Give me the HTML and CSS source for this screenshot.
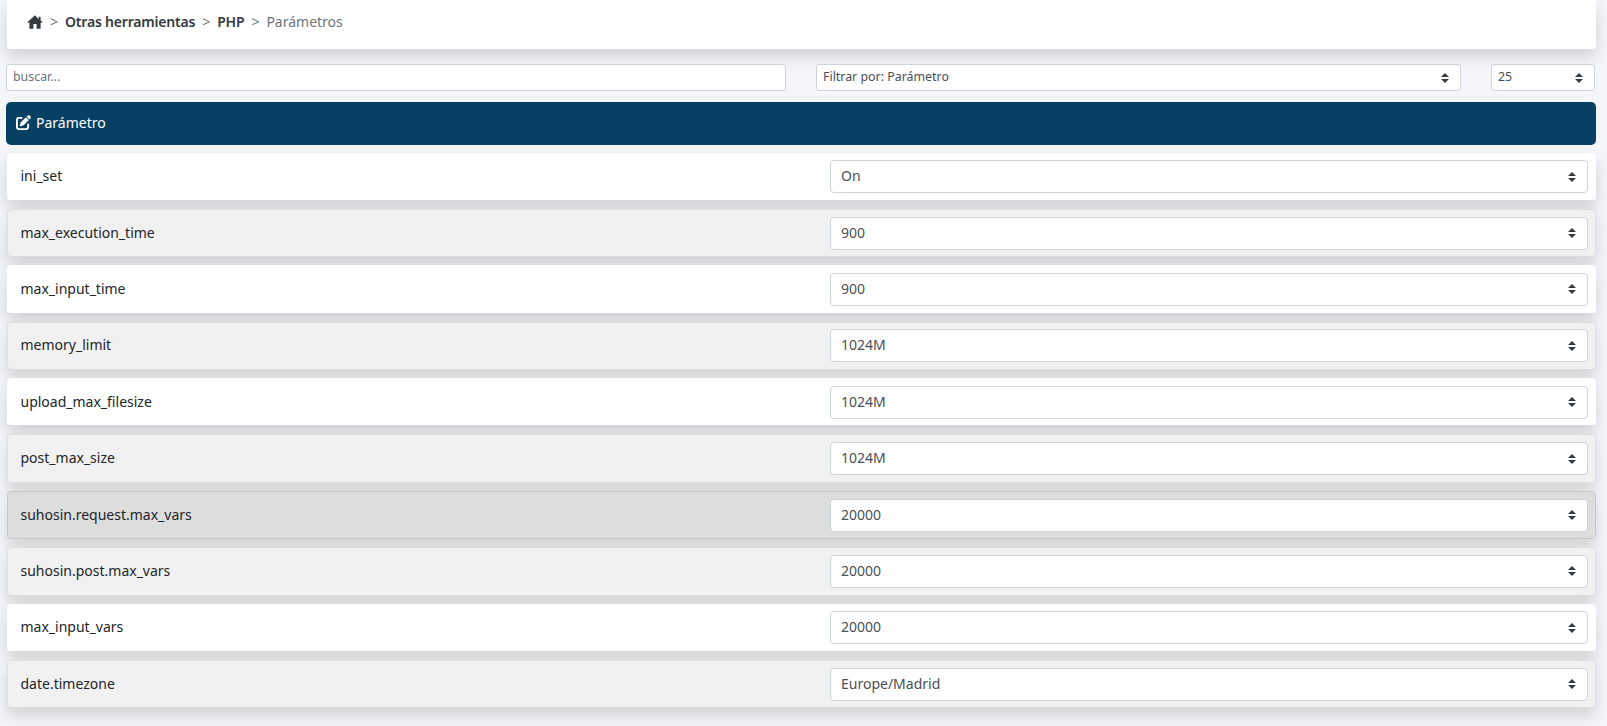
FILE: index.html
```html
<!DOCTYPE html>
<html lang="es">
<head>
<meta charset="utf-8">
<title>Parámetros</title>
<link rel="stylesheet" href="styles.css">
</head>
<body>
<div class="page">
  <nav class="crumbs">
    <svg class="home" viewBox="2 3 20 17" aria-hidden="true"><path d="M10 20v-6h4v6h5v-8h3l-3-2.7V5h-2.5v2.95L12 3 2 12h3v8z"/></svg>
    <span class="sep">&gt;</span>
    <a class="crumb">Otras herramientas</a>
    <span class="sep">&gt;</span>
    <a class="crumb">PHP</a>
    <span class="sep">&gt;</span>
    <span class="current">Parámetros</span>
  </nav>

  <div class="filters">
    <input class="field" type="text" placeholder="buscar...">
    <select class="field pick"><option>Filtrar por: Parámetro</option></select>
    <select class="field pick"><option>25</option></select>
  </div>

  <div class="head">
    <svg class="edit" viewBox="0 0 512 512" aria-hidden="true"><path d="M471.6 21.7c-21.9-21.9-57.3-21.9-79.2 0L362.3 51.7l97.9 97.9 30.1-30.1c21.9-21.9 21.9-57.3 0-79.2L471.6 21.7zm-299.2 220c-6.1 6.1-10.8 13.6-13.5 21.9l-29.6 88.8c-2.9 8.6-.6 18.1 5.8 24.6s15.9 8.7 24.6 5.8l88.8-29.6c8.2-2.7 15.7-7.4 21.9-13.5L437.7 172.3 339.7 74.3 172.4 241.7zM96 64C43 64 0 107 0 160V416c0 53 43 96 96 96H352c53 0 96-43 96-96V320c0-17.7-14.3-32-32-32s-32 14.3-32 32v96c0 17.7-14.3 32-32 32H96c-17.7 0-32-14.3-32-32V160c0-17.7 14.3-32 32-32h96c17.7 0 32-14.3 32-32s-14.3-32-32-32H96z"/></svg>
    <span>Parámetro</span>
  </div>

  <div class="rows">
    <div class="row light"><span class="name">ini_set</span><select class="value"><option>On</option></select></div>
    <div class="row grey"><span class="name">max_execution_time</span><select class="value"><option>900</option></select></div>
    <div class="row light"><span class="name">max_input_time</span><select class="value"><option>900</option></select></div>
    <div class="row grey"><span class="name">memory_limit</span><select class="value"><option>1024M</option></select></div>
    <div class="row light"><span class="name">upload_max_filesize</span><select class="value"><option>1024M</option></select></div>
    <div class="row grey"><span class="name">post_max_size</span><select class="value"><option>1024M</option></select></div>
    <div class="row active"><span class="name">suhosin.request.max_vars</span><select class="value"><option>20000</option></select></div>
    <div class="row grey"><span class="name">suhosin.post.max_vars</span><select class="value"><option>20000</option></select></div>
    <div class="row light"><span class="name">max_input_vars</span><select class="value"><option>20000</option></select></div>
    <div class="row grey"><span class="name">date.timezone</span><select class="value"><option>Europe/Madrid</option></select></div>
  </div>
</div>
</body>
</html>
```

FILE: styles.css
```css
* { box-sizing: border-box; }

html, body {
  margin: 0;
  height: 100%;
  overflow: hidden;
}

body {
  background: #f4f6f9;
  color: #212529;
  font-family: "Noto Sans", Lato, sans-serif;
  font-size: 14px;
}

.page {
  padding: 0 11px 0 6px;
}

.crumbs {
  display: flex;
  align-items: center;
  height: 49px;
  margin: 0 0 15px 1px;
  padding: 0 0 6px 20px;
  background: #fff;
  border-radius: 0 0 4px 4px;
  box-shadow: 0 8px 16px rgba(0, 0, 0, .15);
  font-size: 14px;
}

.home {
  width: 16px;
  height: 14px;
  fill: #343a40;
}

.sep {
  margin: 0 7px;
  color: #6c757d;
}

.crumb {
  color: #343a40;
  font-weight: 600;
  letter-spacing: -.2px;
}

.current {
  color: #6c757d;
}

.filters {
  display: grid;
  grid-template-columns: 780px 645px 104px;
  column-gap: 30px;
  margin-bottom: 11px;
}

.field {
  height: 27px;
  padding: 0 6px 2px;
  background-color: #fff;
  border: 1px solid #ced4da;
  border-radius: 3px;
  color: #495057;
  font-family: inherit;
  font-size: 12.4px;
  outline: none;
}

.field::placeholder {
  color: #6c757d;
  opacity: 1;
}

.pick, .value {
  appearance: none;
  -webkit-appearance: none;
  background-image: url("data:image/svg+xml,%3Csvg xmlns='http://www.w3.org/2000/svg' width='4' height='5' viewBox='0 0 4 5'%3E%3Cpath fill='%23343a40' d='M2 0L0 2h4zm0 5L0 3h4z'/%3E%3C/svg%3E");
  background-repeat: no-repeat;
  background-size: 8px 10px;
  background-position: right 11px center;
}

.head {
  display: flex;
  align-items: center;
  gap: 5px;
  height: 43px;
  margin-bottom: 7.5px;
  padding: 0 0 2px 10px;
  background: #064063;
  border-radius: 5px;
  color: #fff;
  font-size: 14px;
}

.edit {
  width: 15px;
  height: 15px;
  fill: #fff;
}

.rows {
  display: flex;
  flex-direction: column;
  gap: 8px;
}

.row {
  display: flex;
  align-items: center;
  justify-content: space-between;
  height: 48.4px;
  margin-left: 1px;
  padding: 0 7px 0 12.5px;
  border: 1px solid #dedede;
  border-radius: 4px;
  box-shadow: 0 8px 16px rgba(0, 0, 0, .15);
}

.light {
  background: #fff;
  border-color: #fff;
  border-bottom-color: transparent;
  background-clip: padding-box;
}

.grey {
  background: #f1f1f1;
}

.active {
  background: #dddddd;
  border-color: #c8c8c8;
}

.name {
  color: #212529;
  font-size: 14px;
  padding-bottom: 2px;
}

.value {
  width: 758px;
  height: 33px;
  padding: 0 10px 2px;
  background-color: #fff;
  border: 1px solid #ced4da;
  border-radius: 4px;
  color: #495057;
  font-family: inherit;
  font-size: 14px;
  outline: none;
}
```
